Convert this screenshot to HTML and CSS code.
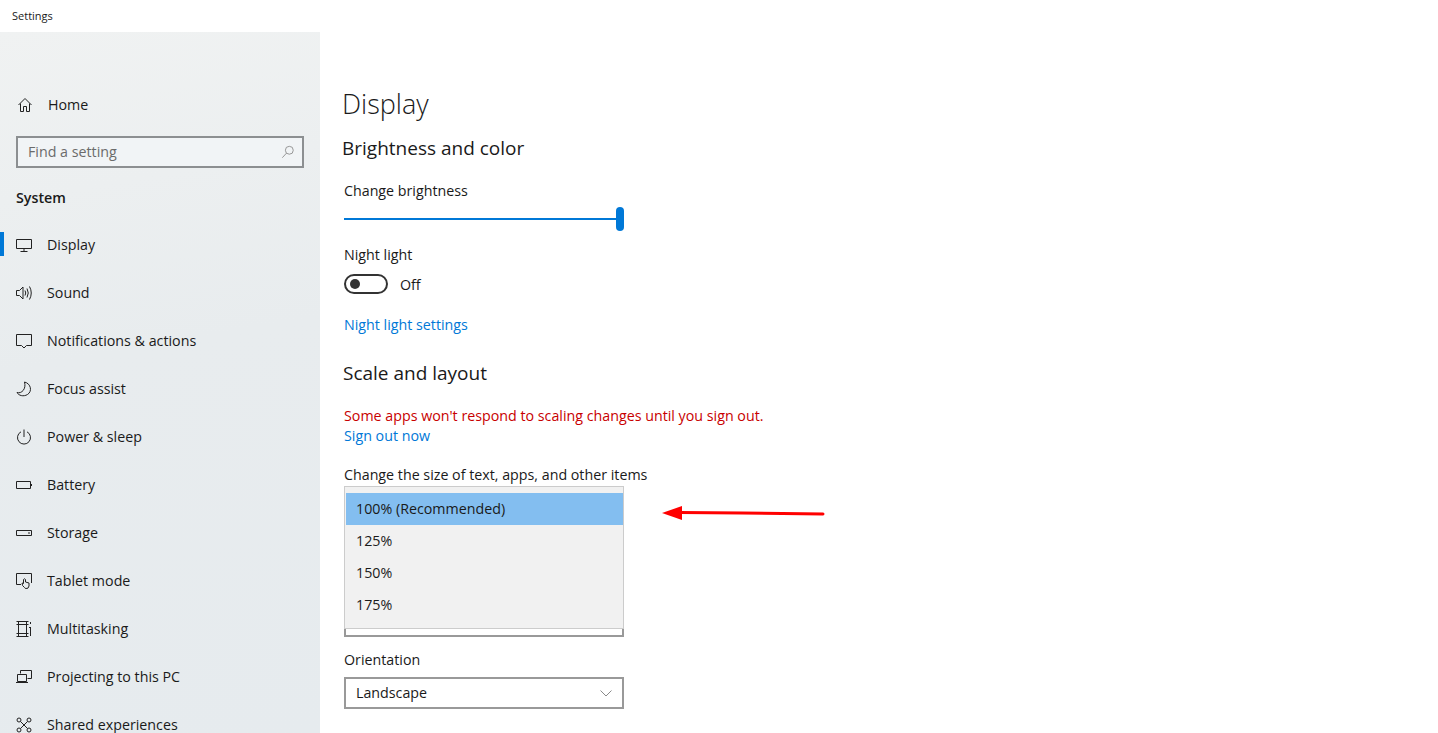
FILE: index.html
```html
<!DOCTYPE html>
<html lang="en">
<head>
  <meta charset="UTF-8">
  <title>Settings</title>
  <link rel="stylesheet" href="styles.css">
</head>
<body>
  <div class="titlebar">Settings</div>
  <div class="window">
    <!-- sidebar -->
    <aside class="sidebar">
      <div class="home-row">
        <svg class="icon" viewBox="0 0 16 16"><path d="M1.5 8 8 1.5 14.500 8M3.500 6.500V14.500H6.500V9.500H9.500V14.500H12.500V6.500"/></svg>
        <span>Home</span>
      </div>
      <div class="search">
        <span>Find a setting</span>
        <svg class="search-icon" viewBox="0 0 16 16"><circle cx="9.500" cy="6" r="4.500"/><path d="M6.300 9.300 1.500 14.500"/></svg>
      </div>
      <div class="group-title">System</div>
      <nav>
        <div class="nav-item active">
          <svg class="icon" viewBox="0 0 16 16"><path d="M.5 2.500H15.500V11.500H.5ZM8 11.500V14.500M4.500 14.500H11.500"/></svg>
          <span>Display</span>
        </div>
        <div class="nav-item">
          <svg class="icon" viewBox="0 0 16 16"><path d="M.5 5.500H3.500L7 2V14L3.500 10.500H.5ZM9 5.500Q10.500 8 9 10.500M11 3.500Q13.500 8 11 12.500M13.500 1.500Q17 8 13.500 14.500"/></svg>
          <span>Sound</span>
        </div>
        <div class="nav-item">
          <svg class="icon" viewBox="0 0 16 16"><path d="M.5 1.500H15.500V12.500H10.500L8 15 5.500 12.500H.5Z"/></svg>
          <span>Notifications &amp; actions</span>
        </div>
        <div class="nav-item">
          <svg class="icon" viewBox="0 0 16 16"><path d="M8.500 1C15 2.500 16.500 10.500 11.500 13.500 7.500 16 2.500 14.500 1 11.500 5.500 13 10.500 8 8.500 1Z"/></svg>
          <span>Focus assist</span>
        </div>
        <div class="nav-item">
          <svg class="icon" viewBox="0 0 16 16"><path d="M5 2.800A6.500 6.500 0 1 0 11 2.800M8 .5V8"/></svg>
          <span>Power &amp; sleep</span>
        </div>
        <div class="nav-item">
          <svg class="icon" viewBox="0 0 16 16"><path d="M.5 4.500H14.500V11.500H.5ZM15.500 7V9"/></svg>
          <span>Battery</span>
        </div>
        <div class="nav-item">
          <svg class="icon" viewBox="0 0 16 16"><path d="M.5 5.500H15.500V10.500H.5ZM12 8H14"/></svg>
          <span>Storage</span>
        </div>
        <div class="nav-item">
          <svg class="icon" viewBox="0 0 16 16"><path d="M5 11.500H.5V.5H15.500V10M8.500 14.500Q6 13 6 10L7.500 10.500V6.500Q8.500 5 9.500 6.500V9L13 10V13Q12.500 16 10 15.500Q9 15.500 8.500 14.500Z"/></svg>
          <span>Tablet mode</span>
        </div>
        <div class="nav-item">
          <svg class="icon" viewBox="0 0 16 16"><path d="M.5 .5H12.500M.5 15.500H12.500M2.500 .5V15.500M10.500 .5V15.500M.5 3.500H12.500M.5 12.500H12.500M14.500 1V3M14.500 6V15M13 6.500H14.500"/></svg>
          <span>Multitasking</span>
        </div>
        <div class="nav-item">
          <svg class="icon" viewBox="0 0 16 16"><path d="M4.500 4.500V1.500H15.500V9.500H11.500M1.500 5.500H10.500V12.500H1.500ZM0 13.500H12"/></svg>
          <span>Projecting to this PC</span>
        </div>
        <div class="nav-item">
          <svg class="icon" viewBox="0 0 16 16"><circle cx="3" cy="3" r="2"/><circle cx="13" cy="3" r="2"/><circle cx="3" cy="13" r="2"/><circle cx="13" cy="13" r="2"/><path d="M4.500 4.500 11.500 11.500M11.500 4.500 4.500 11.500"/></svg>
          <span>Shared experiences</span>
        </div>
      </nav>
    </aside>

    <!-- main panel -->
    <main class="content">
      <h1>Display</h1>
      <h2 class="first-head">Brightness and color</h2>
      <div class="label brightness-label">Change brightness</div>
      <div class="slider"><div class="slider-track"></div><div class="slider-thumb"></div></div>
      <div class="label night-label">Night light</div>
      <div class="toggle-row">
        <div class="toggle"><div class="toggle-dot"></div></div>
        <span class="toggle-text">Off</span>
      </div>
      <a class="link night-link">Night light settings</a>
      <h2 class="scale-head">Scale and layout</h2>
      <div class="warning">Some apps won't respond to scaling changes until you sign out.</div>
      <a class="link">Sign out now</a>
      <div class="label size-label">Change the size of text, apps, and other items</div>
      <div class="scale-select">
        <div class="select select-behind"></div>
        <ul class="popup">
          <li class="selected">100% (Recommended)</li>
          <li>125%</li>
          <li>150%</li>
          <li>175%</li>
        </ul>
      </div>
      <div class="label orientation-label">Orientation</div>
      <div class="select">
        <span>Landscape</span>
        <svg class="chevron" viewBox="0 0 12 7"><path d="M.5.5 6 6 11.500.5"/></svg>
      </div>
      <svg class="arrow" viewBox="0 0 164 14"><path class="arrow-head" d="M0 7 20 0V14Z"/><path class="arrow-line" d="M18 6.500 80 7 161 8"/></svg>
    </main>
  </div>
</body>
</html>
```

FILE: styles.css
```css
* {
  margin: 0;
  padding: 0;
  box-sizing: border-box;
}

html, body {
  height: 733px;
  overflow: hidden;
}

body {
  font-family: "Open Sans", "Noto Sans", Arial, sans-serif;
  font-size: 14.25px;
  line-height: 20px;
  color: #1a1a1a;
  background-color: #fff;
}

.titlebar {
  height: 32px;
  padding: 6px 0 0 12px;
  font-size: 11px;
}

.window {
  display: flex;
  height: 701px;
  position: relative;
}

/* Sidebar */
.sidebar {
  width: 320px;
  flex-shrink: 0;
  overflow: hidden;
  background: linear-gradient(170deg, #f0f2f2 0%, #e8ecee 45%, #e6ebee 100%);
}

.icon {
  width: 16px;
  height: 16px;
  flex-shrink: 0;
  fill: none;
  stroke: #222;
  stroke-width: 1;
}

.home-row {
  display: flex;
  align-items: center;
  gap: 15px;
  height: 48px;
  margin-top: 49px;
  padding-left: 17px;
}

.search {
  display: flex;
  align-items: center;
  justify-content: space-between;
  width: 288px;
  height: 32px;
  margin: 7px 0 0 16px;
  padding: 0 7px 0 10px;
  border: 2px solid #8c8f91;
  background-color: #f1f4f6;
  color: #6b6b6b;
}

.search-icon {
  width: 14px;
  height: 14px;
  fill: none;
  stroke: #8a8a8a;
}

.group-title {
  margin: 20px 0 0 16px;
  font-weight: 600;
}

.nav-item {
  display: flex;
  align-items: center;
  gap: 15px;
  height: 48px;
  padding-left: 16px;
  position: relative;
}

nav {
  margin-top: 13px;
}

.nav-item.active::before {
  content: "";
  position: absolute;
  left: 0;
  top: 11px;
  width: 4px;
  height: 24px;
  background-color: #0078d7;
}

/* Main panel */
.content {
  flex: 1;
  padding: 52px 0 0 24px;
}

h1 {
  font-size: 27px;
  font-weight: 300;
  line-height: 40px;
  margin-left: -2px;
}

h2 {
  font-size: 19px;
  font-weight: 400;
  line-height: 28px;
  margin-left: -2px;
}

.first-head {
  margin-top: 10px;
}

.label {
  line-height: 20px;
}

.brightness-label {
  margin-top: 19px;
}

.slider {
  position: relative;
  width: 280px;
  height: 24px;
  margin-top: 6px;
}

.slider-track {
  position: absolute;
  left: 0;
  right: 0;
  top: 11px;
  height: 2px;
  background-color: #0078d7;
}

.slider-thumb {
  position: absolute;
  right: 0;
  top: 0;
  width: 8px;
  height: 24px;
  border-radius: 4px;
  background-color: #0078d7;
}

.night-label {
  margin-top: 14px;
}

.toggle-row {
  display: flex;
  align-items: center;
  gap: 12px;
  height: 20px;
  margin-top: 9px;
}

.toggle-text {
  padding-top: 2px;
}

.toggle {
  width: 44px;
  height: 20px;
  padding: 4px;
  border: 2px solid #333;
  border-radius: 10px;
}

.toggle-dot {
  width: 10px;
  height: 10px;
  margin-top: -1px;
  border-radius: 50%;
  background-color: #333;
}

.link {
  display: block;
  color: #0078d7;
}

.night-link {
  margin-top: 21px;
}

.scale-head {
  margin-top: 24px;
  margin-left: -1px;
}

.warning {
  margin-top: 19px;
  color: #c80000;
}

.size-label {
  margin-top: 19px;
}

.scale-select {
  position: relative;
  display: flex;
  align-items: flex-end;
  width: 280px;
  height: 151px;
  margin-top: 1px;
}

.select {
  display: flex;
  align-items: center;
  justify-content: space-between;
  width: 280px;
  height: 32px;
  padding: 0 10px;
  border: 2px solid #999;
}

.chevron {
  width: 12px;
  height: 7px;
  fill: none;
  stroke: #8a8a8a;
}

.popup {
  position: absolute;
  left: 0;
  top: 0;
  width: 280px;
  height: 143px;
  padding: 6px 0 0 1px;
  list-style: none;
  background-color: #f1f1f1;
  border: 1px solid #ccc;
}

.popup li {
  height: 32px;
  padding-left: 10px;
  line-height: 31px;
}

.popup li.selected {
  background-color: #83bef0;
}

.orientation-label {
  margin-top: 13px;
  margin-bottom: 7px;
}

.arrow {
  position: absolute;
  left: 662px;
  top: 474px;
  width: 164px;
  height: 14px;
}

.arrow-head {
  fill: #f00;
}

.arrow-line {
  fill: none;
  stroke: #f00;
  stroke-width: 3;
  stroke-linecap: round;
}
```
